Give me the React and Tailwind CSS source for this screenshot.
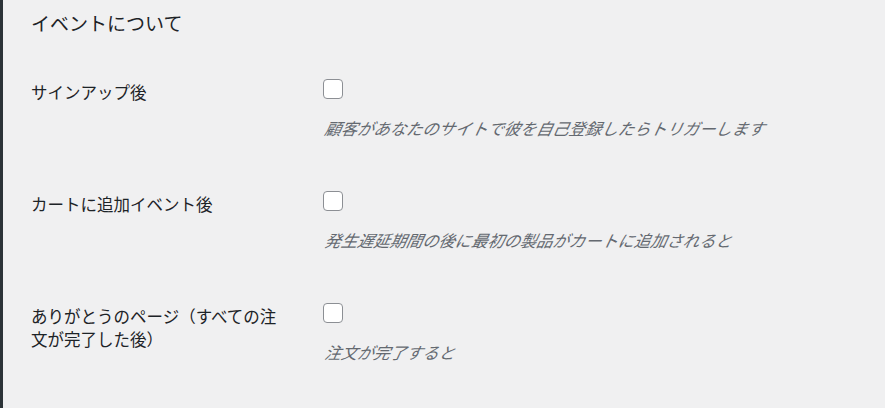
const rows = [
  {
    label: "サインアップ後",
    description: "顧客があなたのサイトで彼を自己登録したらトリガーします",
  },
  {
    label: "カートに追加イベント後",
    description: "発生遅延期間の後に最初の製品がカートに追加されると",
  },
  {
    label: "ありがとうのページ（すべての注文が完了した後）",
    description: "注文が完了すると",
  },
]

const EventRow = ({ label, description }) => {
  return (
    <div className="flex py-[26px]">
      <div className="w-[292px] shrink-0 pr-[36px] pt-[2px] text-[16.5px] leading-[22.5px] font-normal text-[#1d2327]">
        {label}
      </div>
      <div className="flex flex-col items-start">
        <input
          type="checkbox"
          className="appearance-none w-[20px] h-[20px] rounded-[4px] border border-[#8c8f94] bg-white"
        />
        <p className="mt-[18px] text-[16.3px] leading-[22px] text-[#646970]">
          <span className="inline-block italic origin-bottom-left skew-x-[-12deg]">
            {description}
          </span>
        </p>
      </div>
    </div>
  )
}

const App = () => {
  return (
    <div
      className="min-h-[408px] w-full bg-[#f0f0f1] border-l-[3px] border-[#2c3338] pl-[28px]"
      style={{ fontFamily: '"Noto Sans CJK JP", "Noto Sans", sans-serif' }}
    >
      <h2 className="pt-[11px] h-[53px] text-[19px] leading-[24px] font-normal text-[#1d2327]">
        イベントについて
      </h2>
      {rows.map((row) => (
        <EventRow key={row.label} {...row} />
      ))}
    </div>
  )
}

export default App
